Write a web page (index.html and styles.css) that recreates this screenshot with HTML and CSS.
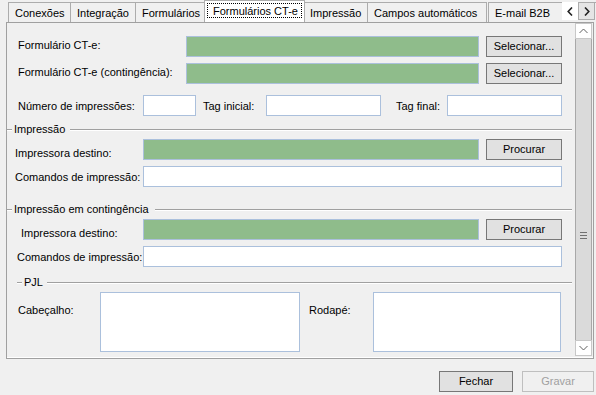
FILE: index.html
```html
<!DOCTYPE html>
<html lang="pt-BR">
<head>
    <meta charset="UTF-8">
    <title>Formulários CT-e</title>
    <link rel="stylesheet" href="styles.css">
</head>
<body>

<div class="window">

    <!-- Tabs -->
    <div class="tabs">
        <div class="tab" style="width: 63px">Conexões</div>
        <div class="tab" style="width: 66px">Integração</div>
        <div class="tab" style="width: 71px">Formulários</div>
        <div class="tab selected" style="width: 101px"><span class="focus">Formulários CT-e</span></div>
        <div class="tab" style="width: 65px">Impressão</div>
        <div class="tab" style="width: 120px">Campos automáticos</div>
        <div class="tab last">E-mail B2B</div>
        <div class="tab-arrows">
            <div class="arrow left">
                <svg width="6" height="9" viewBox="0 0 6 9"><path d="M5 0.5 L1.2 4.5 L5 8.5" fill="none" stroke="#222" stroke-width="1.6"/></svg>
            </div>
            <div class="arrow right">
                <svg width="6" height="9" viewBox="0 0 6 9"><path d="M1 0.5 L4.8 4.5 L1 8.5" fill="none" stroke="#222" stroke-width="1.6"/></svg>
            </div>
        </div>
    </div>

    <!-- Tab page -->
    <div class="page">
        <div class="content">

            <div class="row r1">
                <span class="label w-form up">Formulário CT-e:</span>
                <div class="field green w-green1"></div>
                <div class="button">Selecionar...</div>
            </div>
            <div class="row r2">
                <span class="label w-form up">Formulário CT-e (contingência):</span>
                <div class="field green w-green1"></div>
                <div class="button">Selecionar...</div>
            </div>
            <div class="row r3">
                <span class="label w-num">Número de impressões:</span>
                <div class="field w-num-input"></div>
                <span class="label w-tag-ini">Tag inicial:</span>
                <div class="field w-tag"></div>
                <span class="label w-tag-fim">Tag final:</span>
                <div class="field w-tag"></div>
            </div>

            <div class="legend g1">
                <div class="line lead"></div>
                <span class="legend-text">Impressão</span>
                <div class="line fill"></div>
            </div>
            <div class="row r4 group-row">
                <span class="label w-g1 down">Impressora destino:</span>
                <div class="field green w-green2"></div>
                <div class="button">Procurar</div>
            </div>
            <div class="row r5 group-row">
                <span class="label w-g1">Comandos de impressão:</span>
                <div class="field w-wide"></div>
            </div>

            <div class="legend g2">
                <div class="line lead"></div>
                <span class="legend-text">Impressão em contingência</span>
                <div class="line fill"></div>
            </div>
            <div class="row r6 group-row2">
                <span class="label w-g2a down">Impressora destino:</span>
                <div class="field green w-green2"></div>
                <div class="button">Procurar</div>
            </div>
            <div class="row r7 group-row3">
                <span class="label w-g2b">Comandos de impressão:</span>
                <div class="field w-wide"></div>
            </div>

            <div class="legend g3">
                <div class="line lead pjl"></div>
                <span class="legend-text">PJL</span>
                <div class="line fill"></div>
            </div>
            <div class="pjl-row">
                <span class="label w-cab">Cabeçalho:</span>
                <div class="field area w-cab-area"></div>
                <span class="label w-rod">Rodapé:</span>
                <div class="field area w-rod-area"></div>
            </div>

        </div>

        <!-- Scrollbar -->
        <div class="scrollbar">
            <div class="scroll-btn">
                <svg width="9" height="6" viewBox="0 0 9 6"><path d="M0.5 5 L4.5 1 L8.5 5" fill="none" stroke="#606060" stroke-width="1"/></svg>
            </div>
            <div class="thumb">
                <div class="grip"></div>
            </div>
            <div class="scroll-btn">
                <svg width="9" height="6" viewBox="0 0 9 6"><path d="M0.5 1 L4.5 5 L8.5 1" fill="none" stroke="#606060" stroke-width="1"/></svg>
            </div>
        </div>
    </div>

    <!-- Footer buttons -->
    <div class="footer">
        <div class="button fechar">Fechar</div>
        <div class="button gravar">Gravar</div>
    </div>

</div>

</body>
</html>
```

FILE: styles.css
```css
body {
    margin: 0;
    font-family: "Liberation Sans", Arial, sans-serif;
    font-size: 11px;
    color: #000;
    background-color: #f0f0f0;
}
.window {
    width: 596px;
    height: 395px;
    overflow: hidden;
}

/* Tabs */
.tabs {
    display: flex;
    align-items: flex-end;
    height: 22px;
    padding-left: 8px;
    position: relative;
}
.tab {
    box-sizing: border-box;
    height: 20px;
    border: 1px solid #acacac;
    border-bottom: none;
    margin-right: -1px;
    padding: 4px 0 0 6px;
    line-height: 13px;
    white-space: nowrap;
    background-color: #f0f0f0;
}
.tab.selected {
    height: 22px;
    background-color: #fff;
    margin-left: -1px;
    margin-right: -2px;
    padding: 2px 2px 0 2px;
    position: relative;
    z-index: 1;
}
.tab.selected .focus {
    display: block;
    border: 1px dotted #000;
    padding: 0 4px 0 5px;
    line-height: 14px;
    height: 15px;
    box-sizing: border-box;
}
.tab.last {
    flex: 1;
    margin-left: 2px;
    overflow: hidden;
}
.tab-arrows {
    position: absolute;
    right: 1px;
    top: 2px;
    display: flex;
    z-index: 2;
}
.arrow {
    box-sizing: border-box;
    width: 16px;
    height: 18px;
    display: flex;
    align-items: center;
    justify-content: center;
}
.arrow.left {
    background-color: #fff;
}
.arrow.right {
    background-color: #e5e5e5;
    border: 1px solid #acacac;
    width: 17px;
}

/* Page */
.page {
    display: flex;
    box-sizing: border-box;
    margin-left: 6px;
    width: 588px;
    height: 337px;
    border: 1px solid #a0a0a0;
    padding-right: 1px;
    background-color: #f0f0f0;
    box-shadow: inset 0 -1px 0 #fff;
}
.content {
    width: 568px;
    padding-top: 13px;
}
.row {
    display: flex;
    align-items: center;
    height: 21px;
    padding-left: 11px;
}
.r2 { margin-top: 6px; }
.r3 { margin-top: 11px; }
.r4 { margin-top: 3px; }
.r5 { margin-top: 6px; }
.r6 { margin-top: 3px; }
.r7 { margin-top: 6px; }
.group-row { padding-left: 8px; }
.group-row2 { padding-left: 14px; }
.group-row3 { padding-left: 10px; }

.label {
    white-space: nowrap;
    flex-shrink: 0;
}
.label.up { margin-bottom: 3px; }
.label.down { margin-top: 6px; }
.w-form { width: 168px; }
.w-num { width: 125px; }
.w-tag-ini { width: 63px; margin-left: 7px; }
.w-tag-fim { width: 51px; margin-left: 15px; }
.w-g1 { width: 128px; }
.w-g2a { width: 122px; }
.w-g2b { width: 126px; }

.field {
    box-sizing: border-box;
    height: 21px;
    border: 1px solid #abc0dc;
    background-color: #fff;
    flex-shrink: 0;
}
.field.green {
    background-color: #8fbc8b;
}
.w-green1 { width: 293px; }
.w-green2 { width: 336px; }
.w-num-input { width: 53px; }
.w-tag { width: 115px; }
.w-wide { width: 419px; }

.button {
    box-sizing: border-box;
    width: 76px;
    height: 21px;
    margin-left: 7px;
    border: 1px solid #777;
    background-color: #e1e1e1;
    text-align: center;
    line-height: 19px;
    flex-shrink: 0;
}

/* Group box legends */
.legend {
    display: flex;
    align-items: flex-start;
    height: 14px;
    line-height: 14px;
}
.g1 { margin-top: 6px; }
.g2 { margin-top: 15px; }
.g3 { margin-top: 8px; }
.line {
    height: 0;
    margin-top: 7px;
    border-top: 1px solid #a0a0a0;
    border-bottom: 1px solid #fff;
}
.line.lead {
    width: 5px;
    margin-right: 2px;
}
.line.lead.pjl {
    margin-left: 10px;
}
.line.fill {
    flex: 1;
    margin-left: 5px;
    margin-right: 2px;
}
.g2 .line.fill { margin-left: 6px; }
.g3 .line.fill { margin-left: 4px; }

/* PJL */
.pjl-row {
    display: flex;
    align-items: flex-start;
    margin-top: 3px;
    padding-left: 11px;
}
.pjl-row .label {
    margin-top: 12px;
}
.w-cab { width: 82px; }
.w-rod { width: 64px; margin-left: 9px; }
.field.area { height: 60px; }
.w-cab-area { width: 200px; }
.w-rod-area { width: 188px; }

/* Scrollbar */
.scrollbar {
    display: flex;
    flex-direction: column;
    width: 17px;
    margin-left: 1px;
    height: 333px;
}
.scroll-btn {
    box-sizing: border-box;
    height: 16px;
    background-color: #fff;
    border: 1px solid #c8c8c8;
    display: flex;
    align-items: center;
    justify-content: center;
}
.thumb {
    flex: 1;
    box-sizing: border-box;
    background-color: #dadada;
    border: 1px solid #a8a8a8;
    border-top: none;
    border-bottom: none;
    padding-top: 193px;
}
.grip {
    width: 7px;
    height: 5px;
    margin: 0 auto;
    border-top: 1px solid #707070;
    border-bottom: 1px solid #707070;
    background: linear-gradient(#dadada 2px, #707070 2px, #707070 3px, #dadada 3px);
}

/* Footer */
.footer {
    display: flex;
    justify-content: flex-end;
    padding-top: 12px;
    padding-right: 2px;
}
.footer .button {
    margin-left: 9px;
}
.fechar { width: 74px; }
.gravar {
    width: 72px;
    border-color: #bfbfbf;
    background-color: #f0f0f0;
    color: #a0a0a0;
}
```
